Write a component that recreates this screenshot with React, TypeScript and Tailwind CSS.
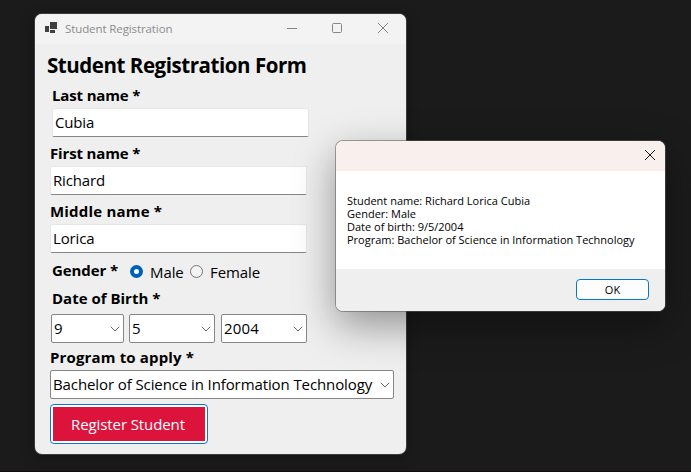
import type { ReactNode } from "react";

function Label({ className, children }: { className: string; children: ReactNode }) {
  return <div className={`h-5 whitespace-nowrap text-[15px] leading-5 font-bold ${className}`}>{children}</div>;
}

function TextField({ value, className }: { value: string; className: string }) {
  return (
    <div
      className={`flex h-[29px] w-[257px] items-start rounded-[2px] border border-[#e6e6e6] border-b-[#868686] bg-white pt-[3px] pl-[2px] text-[15px] leading-5 tracking-[-0.15px] ${className}`}
    >
      {value}
    </div>
  );
}

function Chevron() {
  return (
    <svg width="10" height="6" viewBox="0 0 10 6" fill="none" stroke="#666" strokeWidth="1" className="mt-px shrink-0">
      <path d="M0.8 0.8 5 5 9.2 0.8" />
    </svg>
  );
}

function Combo({ value, className }: { value: string; className: string }) {
  return (
    <div
      className={`flex h-[29px] items-center justify-between rounded-[2px] border border-[#868686] bg-white pr-[3px] pl-[2px] text-[15px] leading-5 whitespace-nowrap ${className}`}
    >
      <span className="-mt-px">{value}</span>
      <Chevron />
    </div>
  );
}

function Radio({ label, checked, className }: { label: string; checked?: boolean; className: string }) {
  return (
    <div className={`flex items-start text-[15px] leading-5 tracking-[-0.1px] ${className}`}>
      <svg width="13" height="13" viewBox="0 0 13 13" className="mt-[5px] mr-[7px] shrink-0">
        {checked ? (
          <circle cx="6.5" cy="6.5" r="4.5" fill="#fff" stroke="#005fb8" strokeWidth="4" />
        ) : (
          <circle cx="6.5" cy="6.5" r="6" fill="#f3f3f3" stroke="#757575" strokeWidth="1" />
        )}
      </svg>
      <span className="mt-[2px]">{label}</span>
    </div>
  );
}

function RegistrationWindow() {
  return (
    <section className="absolute top-[14px] left-[35px] flex h-[440px] w-[371px] flex-col overflow-hidden rounded-[7px] bg-[#efefef] shadow-[0_0_0_1px_#3b3b3b,0_3px_14px_rgba(0,0,0,0.35)]">
      <header className="flex h-[30px] shrink-0 items-center bg-[#f3f3f3] pl-[10px]">
        <svg width="12" height="11" viewBox="0 0 12 11" fill="#3f3f3f" className="mb-[3px]">
          <path d="M5 0h7v7H5zM0 4h4v6H0zM5 8h5v3H5z" />
        </svg>
        <span className="ml-2 text-[11.5px] leading-4 tracking-[-0.1px] whitespace-nowrap text-[#8c8c8c]">
          Student Registration
        </span>
        <div className="mr-[18px] mb-[2px] ml-auto flex items-center">
          <svg width="10" height="10" viewBox="0 0 10 10" stroke="#858585">
            <path d="M0 5.5h10" />
          </svg>
          <svg width="10" height="10" viewBox="0 0 10 10" fill="none" stroke="#858585" className="ml-[35px]">
            <rect x="0.5" y="0.5" width="9" height="9" rx="1" />
          </svg>
          <svg width="10" height="10" viewBox="0 0 10 10" stroke="#858585" className="ml-9">
            <path d="M0 0 10 10M10 0 0 10" />
          </svg>
        </div>
      </header>

      <div className="flex flex-col pl-[15px]">
        <h1 className="mt-[7px] -ml-[3px] h-7 text-[20.5px] leading-7 font-bold tracking-[-0.45px] whitespace-nowrap">
          Student Registration Form
        </h1>
        <Label className="mt-[6px] ml-[2px] tracking-[-0.15px]">Last name *</Label>
        <TextField value="Cubia" className="mt-[3px] ml-[2px]" />
        <Label className="mt-[6px] tracking-[-0.15px]">First name *</Label>
        <TextField value="Richard" className="mt-[3px]" />
        <Label className="mt-[6px] tracking-[0.2px]">Middle name *</Label>
        <TextField value="Lorica" className="mt-[3px]" />
        <div className="mt-[7px] flex h-5">
          <Label className="w-[78px] pl-[2px] tracking-[-0.08px]">Gender *</Label>
          <Radio label="Male" checked className="ml-[2px] w-[60px]" />
          <Radio label="Female" className="" />
        </div>
        <Label className="mt-2 ml-[2px]">Date of Birth *</Label>
        <div className="mt-[6px] ml-[1px] flex">
          <Combo value="9" className="w-[73px]" />
          <Combo value="5" className="ml-[5px] w-[86px]" />
          <Combo value="2004" className="ml-[6px] w-[86px] tracking-[0.15px]" />
        </div>
        <Label className="mt-1 tracking-[0.15px]">Program to apply *</Label>
        <Combo
          value="Bachelor of Science in Information Technology"
          className="mt-[3px] w-[344px] tracking-[-0.1px]"
        />
        <button className="mt-[5px] flex h-10 w-[158px] rounded-[4px] border border-[#0078d4] bg-white p-[2px]">
          <span className="flex h-full w-full items-center justify-center bg-[#dc143c] pr-[2px] text-[15px] leading-5 tracking-[-0.1px] text-white">
            Register Student
          </span>
        </button>
      </div>
    </section>
  );
}

function MessageBox() {
  return (
    <section className="absolute top-[141px] left-[336px] flex h-[170px] w-[329px] flex-col overflow-hidden rounded-[7px] bg-white shadow-[0_0_0_1px_rgba(90,90,90,0.55),0_14px_42px_rgba(0,0,0,0.4)]">
      <header className="flex h-[30px] shrink-0 items-start justify-end bg-[#f9f0ed] pt-[9px] pr-[10px]">
        <svg width="10" height="10" viewBox="0 0 10 10" stroke="#1a1a1a" className="overflow-visible">
          <path d="M0 0 10 10M10 0 0 10" />
        </svg>
      </header>
      <p className="flex-1 pt-[23px] pl-[11px] text-[11px] leading-[13px] whitespace-pre">
        {"Student name: Richard Lorica Cubia\nGender: Male\nDate of birth: 9/5/2004\nProgram: Bachelor of Science in Information Technology"}
      </p>
      <footer className="flex h-[42px] shrink-0 justify-end bg-[#efefef] pt-[10px] pr-4">
        <button className="h-[21px] w-[73px] rounded-[4px] border border-[#0078d4] bg-[#fdfdfd] text-[11px] leading-[19px]">
          OK
        </button>
      </footer>
    </section>
  );
}

export default function App() {
  return (
    <main className="relative h-[472px] w-[691px] overflow-hidden border-b border-[#150a0d] bg-[#1b1b1b] font-['Open_Sans','Noto_Sans',sans-serif] text-black">
      <RegistrationWindow />
      <MessageBox />
    </main>
  );
}
